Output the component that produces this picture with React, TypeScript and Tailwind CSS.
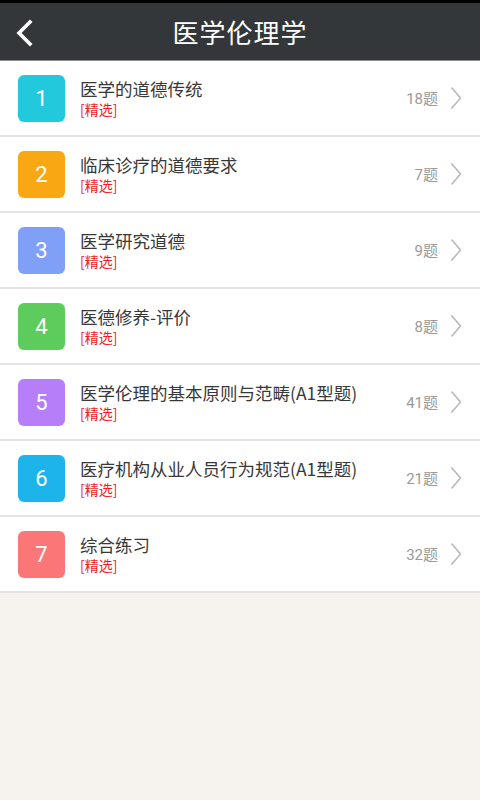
import React from "react";

const items = [
  { n: 1, title: "医学的道德传统", count: "18题", color: "bg-[#22c8dc]" },
  { n: 2, title: "临床诊疗的道德要求", count: "7题", color: "bg-[#f9a814]" },
  { n: 3, title: "医学研究道德", count: "9题", color: "bg-[#80a0f8]" },
  { n: 4, title: "医德修养-评价", count: "8题", color: "bg-[#5dcc5d]" },
  { n: 5, title: "医学伦理的基本原则与范畴(A1型题)", count: "41题", color: "bg-[#b67ef8]" },
  { n: 6, title: "医疗机构从业人员行为规范(A1型题)", count: "21题", color: "bg-[#1db4ec]" },
  { n: 7, title: "综合练习", count: "32题", color: "bg-[#fb7777]" },
];

export default function App() {
  return (
    <div
      className="w-[480px] h-[800px] bg-[#f6f3ee] flex flex-col"
      style={{ fontFamily: "Roboto, 'Noto Sans CJK SC', sans-serif" }}
    >
      <div className="h-[3px] bg-black" />
      <div className="h-[57px] bg-[#33373a] relative flex items-center justify-center">
        <svg
          className="absolute left-[14px] top-[16px]"
          width="20"
          height="28"
          viewBox="0 0 20 28"
        >
          <path d="M16 3 L5 14 L16 25" fill="none" stroke="#ffffff" strokeWidth="3.6" strokeLinecap="square" />
        </svg>
        <span className="text-white text-[26px] leading-none tracking-[1px]" style={{ fontFamily: "'Noto Sans CJK SC', sans-serif" }}>
          医学伦理学
        </span>
      </div>
      <div className="h-px bg-[#8e9193]" />
      <div className="flex flex-col bg-white">
        {items.map((it) => (
          <div key={it.n} className="h-[76px] border-b-2 border-[#e3e3e3] flex items-center pl-[18px] pr-[18px]">
            <div className={`w-[47px] h-[47px] rounded-[6px] ${it.color} flex items-center justify-center text-white text-[22px]`} style={{ fontFamily: "Roboto, sans-serif" }}>
              {it.n}
            </div>
            <div className="flex flex-col ml-[15px] flex-1" style={{ fontFamily: "'Noto Sans CJK SC', sans-serif" }}>
              <span className="text-[17.5px] leading-[22px] text-[#383838]">{it.title}</span>
              <span className="text-[14px] leading-[19px] text-[#f21d1d]">[精选]</span>
            </div>
            <span className="text-[15px] text-[#9a9a9a] mr-[12px] mt-[2px]" style={{ fontFamily: "Roboto, 'Noto Sans CJK SC', sans-serif" }}>
              {it.count}
            </span>
            <svg width="12" height="24" viewBox="0 0 12 24">
              <path d="M1.5 1.5 L10.5 12 L1.5 22.5" fill="none" stroke="#b9b9b9" strokeWidth="1.6" />
            </svg>
          </div>
        ))}
      </div>
    </div>
  );
}
